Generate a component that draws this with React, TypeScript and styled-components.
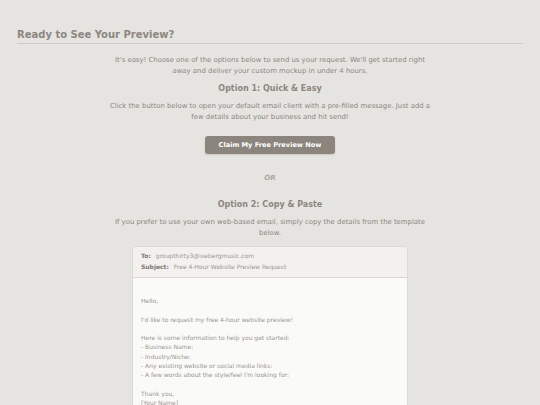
import * as React from 'react';
import styled, { createGlobalStyle } from 'styled-components';

const GlobalStyle = createGlobalStyle`
    html, body {
        margin: 0;
        padding: 0;
        background: #e6e4e0;
    }
    body {
        font-family: 'DejaVu Sans', Verdana, sans-serif;
        color: #8c8680;
    }
`;

const Page = styled.div`
    padding: 29px 17px 0;
    height: 405px;
    box-sizing: border-box;
    overflow: hidden;
`;

const Title = styled.h2`
    margin: 0;
    font-size: 10px;
    font-weight: bold;
    color: #8c8680;
    padding-bottom: 3px;
    border-bottom: 1px solid #cfccc8;
`;

const Content = styled.div`
    width: 322px;
    margin: 0 auto;
    padding-top: 11px;
    text-align: center;
    display: flex;
    flex-direction: column;
    align-items: center;
`;

const Text = styled.p`
    margin: 0;
    font-size: 6.9px;
    line-height: 10.5px;
    color: #8c8680;
`;

const OptionTitle = styled.h3<{ $top: number }>`
    margin: ${(p) => p.$top}px 0 8px;
    font-size: 8px;
    font-weight: bold;
    color: #8c8680;
`;

const Button = styled.a`
    display: inline-block;
    margin-top: 14px;
    width: 130px;
    height: 18px;
    line-height: 18px;
    border-radius: 3px;
    background: #8c857d;
    color: #fff;
    font-size: 6.6px;
    font-weight: bold;
    text-decoration: none;
    box-shadow: 0 1px 2px rgba(0, 0, 0, 0.12);
`;

const Or = styled.div`
    margin-top: 20px;
    font-size: 7px;
    font-weight: bold;
    font-style: italic;
    color: #aaa6a1;
`;

const Card = styled.div`
    margin-top: 8px;
    width: 274px;
    border: 1px solid #dcd9d5;
    border-radius: 3px;
    background: #fafaf9;
    text-align: left;
    overflow: hidden;
`;

const CardHeader = styled.div`
    background: #f3f1ef;
    border-bottom: 1px solid #dcd9d5;
    padding: 4px 8px 5px;
`;

const HeaderRow = styled.div`
    font-size: 6px;
    line-height: 10.5px;
    color: #9a958f;
    b {
        color: #7d7771;
        margin-right: 5px;
    }
`;

const CardBody = styled.div`
    padding: 18px 8px 0;
    font-size: 6px;
    line-height: 9.3px;
    color: #9a958f;
    white-space: pre-line;
`;

const body = `Hello,

I'd like to request my free 4-hour website preview!

Here is some information to help you get started:
- Business Name:
- Industry/Niche:
- Any existing website or social media links:
- A few words about the style/feel I'm looking for:

Thank you,
[Your Name]`;

export default function App() {
    return (
        <>
            <GlobalStyle />
            <Page>
                <Title>Ready to See Your Preview?</Title>
                <Content>
                    <Text>
                        It's easy! Choose one of the options below to send us your request. We'll get
                        started right away and deliver your custom mockup in under 4 hours.
                    </Text>
                    <OptionTitle $top={8}>Option 1: Quick &amp; Easy</OptionTitle>
                    <Text>
                        Click the button below to open your default email client with a pre-filled
                        message. Just add a few details about your business and hit send!
                    </Text>
                    <Button href="#">Claim My Free Preview Now</Button>
                    <Or>OR</Or>
                    <OptionTitle $top={18}>Option 2: Copy &amp; Paste</OptionTitle>
                    <Text>
                        If you prefer to use your own web-based email, simply copy the details from
                        the template below.
                    </Text>
                    <Card>
                        <CardHeader>
                            <HeaderRow>
                                <b>To:</b>groupthirty3@ixebergmusic.com
                            </HeaderRow>
                            <HeaderRow>
                                <b>Subject:</b>Free 4-Hour Website Preview Request
                            </HeaderRow>
                        </CardHeader>
                        <CardBody>{body}</CardBody>
                    </Card>
                </Content>
            </Page>
        </>
    );
}
